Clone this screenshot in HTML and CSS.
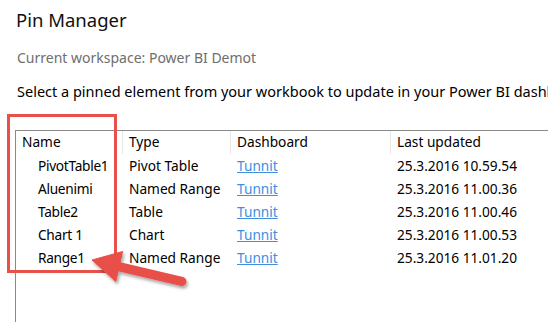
FILE: index.html
```html
<!DOCTYPE html>
<html>
<head>
<meta charset="utf-8">
<link rel="stylesheet" href="styles.css">
</head>
<body>
<div class="page">
  <h1 class="title">Pin Manager</h1>
  <p class="workspace">Current workspace: Power BI Demot</p>
  <p class="instruction">Select a pinned element from your workbook to update in your Power BI dashboard</p>
  <div class="table">
    <div class="hcell first">Name</div>
    <div class="hcell">Type</div>
    <div class="hcell">Dashboard</div>
    <div class="hcell">Last updated</div>

    <div class="cell name">PivotTable1</div>
    <div class="cell">Pivot Table</div>
    <div class="cell"><a class="link" href="#">Tunnit</a></div>
    <div class="cell">25.3.2016 10.59.54</div>

    <div class="cell name">Aluenimi</div>
    <div class="cell">Named Range</div>
    <div class="cell"><a class="link" href="#">Tunnit</a></div>
    <div class="cell">25.3.2016 11.00.36</div>

    <div class="cell name">Table2</div>
    <div class="cell">Table</div>
    <div class="cell"><a class="link" href="#">Tunnit</a></div>
    <div class="cell">25.3.2016 11.00.46</div>

    <div class="cell name">Chart 1</div>
    <div class="cell">Chart</div>
    <div class="cell"><a class="link" href="#">Tunnit</a></div>
    <div class="cell">25.3.2016 11.00.53</div>

    <div class="cell name">Range1</div>
    <div class="cell">Named Range</div>
    <div class="cell"><a class="link" href="#">Tunnit</a></div>
    <div class="cell">25.3.2016 11.01.20</div>
  </div>
  <div class="highlight"></div>
  <svg class="arrow" width="548" height="322" viewBox="0 0 548 322">
    <defs>
      <filter id="sh" x="-20%" y="-50%" width="140%" height="200%">
        <feDropShadow dx="1.5" dy="2.5" stdDeviation="1.6" flood-color="#000" flood-opacity="0.35"/>
      </filter>
    </defs>
    <g filter="url(#sh)" fill="#e8504a" stroke="#e8504a">
      <line x1="114" y1="265.5" x2="182" y2="281.5" stroke-width="9" stroke-linecap="round"/>
      <polygon points="92,260 122.6,251.5 115.8,281.5" stroke-width="1" stroke-linejoin="round"/>
    </g>
  </svg>
</div>
</body>
</html>
```

FILE: styles.css
```css
html, body {
  margin: 0;
  padding: 0;
  background: #ffffff;
}

body {
  width: 548px;
  height: 322px;
  overflow: hidden;
  font-family: "Noto Sans", "Open Sans", sans-serif;
  color: #000;
}

.page {
  position: relative;
  width: 548px;
  height: 322px;
  overflow: hidden;
}

.title {
  margin: 0;
  padding: 6px 0 0 16px;
  font-size: 18.5px;
  font-weight: 400;
  line-height: 28px;
  color: #111;
  white-space: nowrap;
}

.workspace {
  margin: 0;
  padding: 14px 0 0 17px;
  font-size: 14px;
  line-height: 20px;
  color: #6e6e6e;
  white-space: nowrap;
}

.instruction {
  margin: 0;
  padding: 13px 0 0 17px;
  font-size: 14.5px;
  line-height: 20px;
  color: #000;
  white-space: nowrap;
}

.table {
  margin: 29px 0 0 15px;
  border-top: 1px solid #8a8a8a;
  border-left: 1px solid #8a8a8a;
  display: grid;
  grid-template-columns: 106px 108px 160px 1fr;
  grid-auto-rows: 23px;
  height: 200px;
  align-content: start;
  font-size: 13.7px;
}

.hcell {
  height: 23px;
  box-sizing: border-box;
  padding-bottom: 3px;
  display: flex;
  align-items: center;
  padding-left: 6px;
  border-left: 1px solid #e6e6e6;
  color: #000;
  white-space: nowrap;
}

.hcell.first {
  border-left: none;
  padding-left: 6px;
}

.cell {
  display: flex;
  align-items: center;
  padding-left: 7px;
  white-space: nowrap;
}

.cell.name {
  padding-left: 22px;
  letter-spacing: -0.3px;
}

.link {
  color: #3d8fe0;
  text-decoration: underline;
}

.highlight {
  position: absolute;
  left: 7px;
  top: 114px;
  width: 104px;
  height: 153px;
  border: 3px solid #e8504a;
}

.arrow {
  position: absolute;
  left: 0;
  top: 0;
}
```
